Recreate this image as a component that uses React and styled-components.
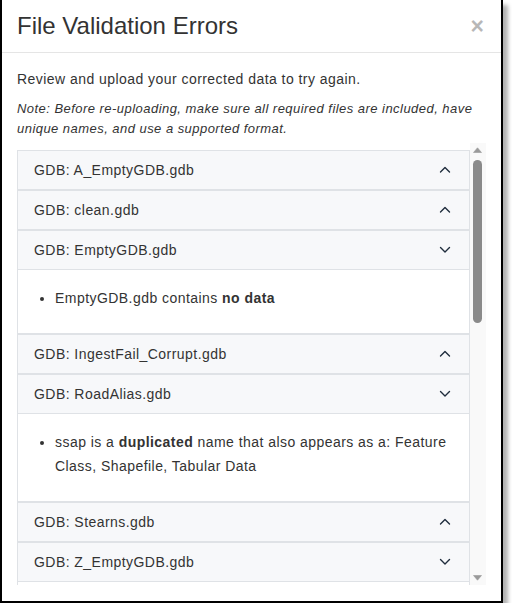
import React from "react";
import styled, { createGlobalStyle } from "styled-components";

const GlobalStyle = createGlobalStyle`
  html, body { margin: 0; padding: 0; background: #ffffff; }
  body { font-family: "Liberation Sans", Arial, sans-serif; color: #333333; }
  * { box-sizing: border-box; }
`;

const Dialog = styled.div`
  width: 503px;
  background: #ffffff;
  border: 2px solid #000000;
  border-top: none;
  box-shadow: 5px 5px 4px rgba(0, 0, 0, 0.3);
  display: flex;
  flex-direction: column;
`;

const Header = styled.div`
  height: 53px;
  padding: 0 17px 0 15px;
  border-bottom: 1px solid #e5e5e5;
  display: flex;
  align-items: center;
  justify-content: space-between;
`;

const Title = styled.h4`
  margin: 0;
  font-size: 24px;
  font-weight: normal;
  line-height: 1.1;
  color: #333333;
`;

const CloseButton = styled.button`
  border: none;
  background: transparent;
  padding: 0;
  margin: 0;
  font-family: "Liberation Sans", Arial, sans-serif;
  font-size: 23px;
  font-weight: bold;
  line-height: 1;
  color: #000000;
  opacity: 0.28;
  cursor: pointer;
`;

const Body = styled.div`
  padding: 16px 15px 16px;
  display: flex;
  flex-direction: column;
`;

const Lead = styled.p`
  margin: 0 0 10px;
  font-size: 14px;
  line-height: 20px;
  letter-spacing: 0.45px;
  color: #333333;
`;

const Note = styled.p`
  margin: 0 0 4px;
  font-size: 13px;
  font-style: italic;
  line-height: 20px;
  letter-spacing: 0.46px;
  color: #333333;
`;

const ScrollFrame = styled.div`
  height: 442px;
  display: flex;
  align-items: stretch;
`;

const Viewport = styled.div`
  flex: 1;
  min-width: 0;
  overflow-y: auto;
  scrollbar-width: none;
  padding-top: 7px;
  &::-webkit-scrollbar { display: none; }
`;

const Scrollbar = styled.div`
  width: 16px;
  flex: none;
  background: #f9f9f9;
  display: flex;
  flex-direction: column;
`;

const ArrowButton = styled.div`
  height: 14px;
  flex: none;
  display: flex;
  align-items: center;
  justify-content: center;
  padding-right: 1px;
`;

const Track = styled.div`
  flex: 1;
  padding: 3px 4px 0 3px;
`;

const Thumb = styled.div`
  height: 163px;
  border-radius: 5px;
  background: #8a8a8a;
`;

function Triangle({ up }) {
  return (
    <svg width="9" height="6" viewBox="0 0 9 6" aria-hidden="true">
      <path
        d={up ? "M0.5 5.5 L4.5 0.8 L8.5 5.5 Z" : "M0.5 0.5 L4.5 5.2 L8.5 0.5 Z"}
        fill="#9a9a9a"
        stroke="#9a9a9a"
        strokeWidth="0.6"
        strokeLinejoin="round"
      />
    </svg>
  );
}

const Accordion = styled.div`
  display: flex;
  flex-direction: column;
`;

const Item = styled.div`
  border: 1px solid #dfe2e6;
  background: #ffffff;
`;

const ItemHeader = styled.div`
  height: 38px;
  padding: 0 18px 0 16px;
  background: #f7f8fa;
  display: flex;
  align-items: center;
  justify-content: space-between;
  border-bottom: ${(p) => (p.$open ? "1px solid #dfe2e6" : "none")};
  box-sizing: content-box;
`;

const ItemTitle = styled.span`
  font-size: 14px;
  letter-spacing: 0.45px;
  color: #333333;
`;

const ItemBody = styled.div`
  padding: 16px 20px 23px;
`;

const List = styled.ul`
  margin: 0;
  padding-left: 17px;
  font-size: 14px;
  line-height: 24px;
  letter-spacing: 0.45px;
  color: #333333;

  b {
    font-weight: bold;
  }
`;

const ChevronSvg = styled.svg`
  display: block;
  flex: none;
`;

function Chevron({ open }) {
  return (
    <ChevronSvg width="12" height="8" viewBox="0 0 12 8" aria-hidden="true">
      <path
        d={open ? "M1.5 1.5 L6 6 L10.5 1.5" : "M1.5 6 L6 1.5 L10.5 6"}
        fill="none"
        stroke="#1f2d3d"
        strokeWidth="1.4"
        strokeLinecap="round"
        strokeLinejoin="round"
      />
    </ChevronSvg>
  );
}

const dup = (name, kinds) => (
  <>
    {name} is a <b>duplicated</b> name that also appears as a: {kinds}
  </>
);

const empty = (name) => (
  <>
    {name} contains <b>no data</b>
  </>
);

const items = [
  { title: "GDB: A_EmptyGDB.gdb", open: false },
  { title: "GDB: clean.gdb", open: false },
  { title: "GDB: EmptyGDB.gdb", open: true, messages: [empty("EmptyGDB.gdb")] },
  { title: "GDB: IngestFail_Corrupt.gdb", open: false },
  {
    title: "GDB: RoadAlias.gdb",
    open: true,
    messages: [dup("ssap", "Feature Class, Shapefile, Tabular Data")],
  },
  { title: "GDB: Stearns.gdb", open: false },
  { title: "GDB: Z_EmptyGDB.gdb", open: true, messages: [empty("Z_EmptyGDB.gdb")] },
];

export default function App() {
  return (
    <>
      <GlobalStyle />
      <Dialog>
        <Header>
          <Title>File Validation Errors</Title>
          <CloseButton aria-label="Close">×</CloseButton>
        </Header>
        <Body>
          <Lead>Review and upload your corrected data to try again.</Lead>
          <Note>
            Note: Before re-uploading, make sure all required files are included, have
            unique names, and use a supported format.
          </Note>
          <ScrollFrame>
            <Viewport>
              <Accordion>
                {items.map((it) => (
                  <Item key={it.title}>
                    <ItemHeader $open={it.open}>
                      <ItemTitle>{it.title}</ItemTitle>
                      <Chevron open={it.open} />
                    </ItemHeader>
                    {it.open && (
                      <ItemBody>
                        <List>
                          {it.messages.map((m, i) => (
                            <li key={i}>{m}</li>
                          ))}
                        </List>
                      </ItemBody>
                    )}
                  </Item>
                ))}
              </Accordion>
            </Viewport>
            <Scrollbar aria-hidden="true">
              <ArrowButton>
                <Triangle up />
              </ArrowButton>
              <Track>
                <Thumb />
              </Track>
              <ArrowButton>
                <Triangle />
              </ArrowButton>
            </Scrollbar>
          </ScrollFrame>
        </Body>
      </Dialog>
    </>
  );
}
